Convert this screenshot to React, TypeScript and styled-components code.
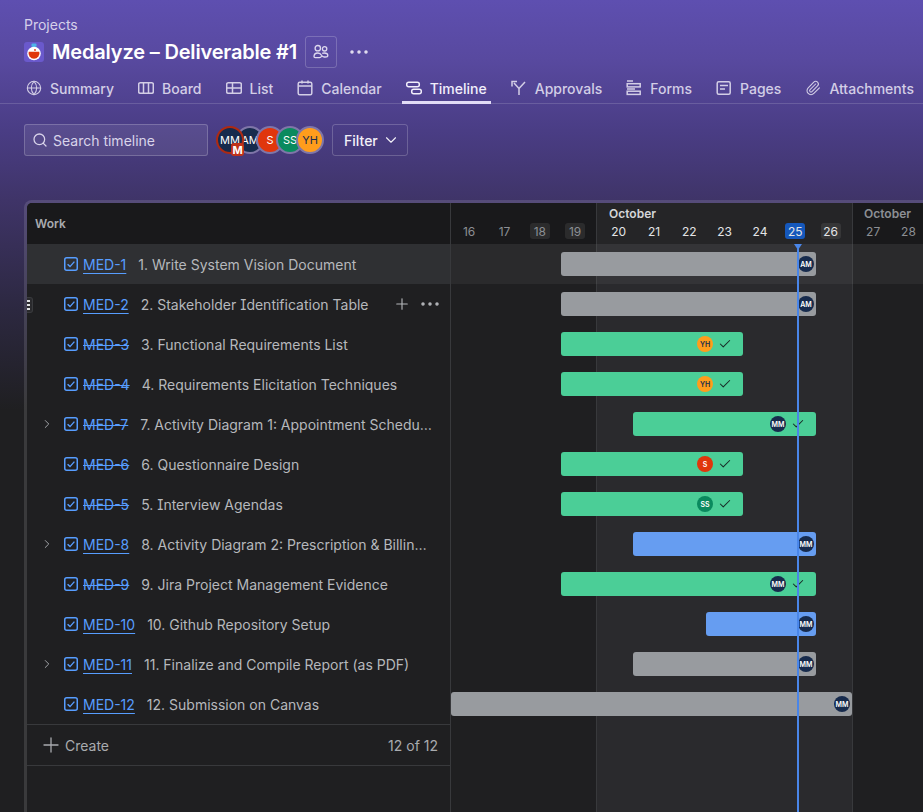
import styled, { createGlobalStyle } from 'styled-components';
import { Check, ChevronDown, ChevronRight, Ellipsis, Globe, Paperclip, Plus, Search } from 'lucide-react';

const GlobalStyle = createGlobalStyle`
  html, body { margin: 0; height: 100%; background: #1f1f21; }
  body { font-family: Inter, "Noto Sans", sans-serif; overflow: hidden; font-feature-settings: 'cv08' 1; }
  #root { height: 100%; }
  * { box-sizing: border-box; }
`;

const Page = styled.div`
  width: 923px;
  height: 812px;
  overflow: hidden;
  display: flex;
  flex-direction: column;
  background: linear-gradient(180deg, #5e4fb0 0px, #58499f 60px, #4a3d85 130px, #3f3468 200px, #2c2840 310px, #1f1f21 410px);
`;

const Header = styled.header`
  display: flex;
  flex-direction: column;
  padding: 17px 0 0 24px;
`;

const Crumb = styled.div`
  font-size: 14px;
  line-height: 16px;
  color: #d6d0ea;
`;

const TitleRow = styled.div`
  display: flex;
  align-items: center;
  height: 32px;
  margin-top: 3px;
`;

const ProjectIcon = styled.svg`
  width: 20px;
  height: 20px;
  margin-right: 8px;
  flex: none;
`;

const Title = styled.h1`
  margin: 0;
  font-size: 20px;
  line-height: 24px;
  font-weight: 600;
  letter-spacing: -0.17px;
  color: #ffffff;
`;

const PeopleButton = styled.button`
  width: 32px;
  height: 32px;
  margin-left: 8px;
  padding: 0;
  display: flex;
  align-items: center;
  justify-content: center;
  background: transparent;
  border: 1px solid rgba(255, 255, 255, 0.2);
  border-radius: 3px;
  color: #ddd8ee;
`;

const MoreButton = styled.span`
  display: flex;
  margin-left: 10px;
  color: #e6e2f2;
`;

const Tabs = styled.nav`
  display: flex;
  gap: 16px;
  height: 34px;
  margin: 2px 0 0 -24px;
  padding: 6px 0 0 22px;
  border-bottom: 1px solid rgba(255, 255, 255, 0.15);
  white-space: nowrap;
`;

const Tab = styled.div<{ $active?: boolean }>`
  display: flex;
  align-items: center;
  gap: 8px;
  height: 28px;
  padding: 0 4px 1px;
  font-size: 14px;
  font-weight: 500;
  color: ${({ $active }) => ($active ? '#f1eefb' : '#d3cee6')};
  border-bottom: 3px solid ${({ $active }) => ($active ? '#e2dcf7' : 'transparent')};
  flex: none;
`;

const TabGlyph = styled.svg`
  width: 16px;
  height: 16px;
  fill: none;
  stroke: currentColor;
  stroke-width: 1.5;
  flex: none;
`;

const Toolbar = styled.div`
  display: flex;
  align-items: center;
  height: 32px;
  margin: 20px 0 44px 24px;
`;

const SearchBox = styled.div`
  width: 184px;
  height: 32px;
  display: flex;
  align-items: center;
  gap: 5px;
  padding-left: 7px;
  border: 1px solid rgba(255, 255, 255, 0.2);
  border-radius: 3px;
  background: rgba(255, 255, 255, 0.08);
  color: #d9d4ea;
  font-size: 14px;
`;

const AvatarStack = styled.div`
  display: flex;
  margin-left: 8px;
  margin-right: 8px;
`;

const StackAvatar = styled.div<{ $bg: string; $first?: boolean }>`
  position: relative;
  width: 28px;
  height: 28px;
  margin-left: ${({ $first }) => ($first ? '0' : '-8px')};
  z-index: ${({ $first }) => ($first ? 2 : 1)};
  display: flex;
  align-items: center;
  justify-content: center;
  border-radius: 50%;
  background: ${({ $bg }) => $bg};
  border: 2px solid ${({ $first }) => ($first ? '#ae2a12' : '#7f76a8')};
  color: ${({ $bg }) => ($bg === '#ff9d1c' ? '#172b4d' : '#ffffff')};
  font-size: 11px;
  font-weight: 400;
`;

const RoleBadge = styled.span`
  position: absolute;
  right: -2px;
  bottom: -4px;
  width: 13px;
  height: 13px;
  display: flex;
  align-items: center;
  justify-content: center;
  background: #c0321a;
  border-radius: 3px;
  color: #fff;
  font-size: 11px;
  font-weight: 700;
`;

const FilterButton = styled.button`
  width: 76px;
  height: 32px;
  display: flex;
  align-items: center;
  gap: 4px;
  padding: 0 0 0 11px;
  background: transparent;
  border: 1px solid rgba(255, 255, 255, 0.2);
  border-radius: 3px;
  color: #f2f0f8;
  font-family: inherit;
  font-size: 14px;
  font-weight: 500;
`;

const Frame = styled.section`
  flex: 1;
  min-height: 0;
  margin-left: 24px;
  display: flex;
  background: #1f1f21;
  background-clip: padding-box;
  border-top: 3px solid rgba(255, 255, 255, 0.12);
  border-left: 3px solid rgba(255, 255, 255, 0.12);
  border-top-left-radius: 8px;
  overflow: hidden;
`;

const WorkPanel = styled.div`
  width: 424px;
  flex: none;
  display: flex;
  flex-direction: column;
  border-right: 1px solid #38393c;
`;

const WorkHead = styled.div`
  height: 41px;
  display: flex;
  align-items: center;
  padding-left: 8px;
  background: #19191b;
  color: #a9abaf;
  font-size: 12px;
  font-weight: 600;
`;

const TaskRow = styled.div<{ $hover?: boolean }>`
  position: relative;
  height: 40px;
  display: flex;
  align-items: center;
  padding: 0 18px 0 13px;
  background: ${({ $hover }) => ($hover ? '#2f3033' : 'transparent')};
  font-size: 14px;
`;

const Expander = styled.span`
  width: 14px;
  margin-right: 10px;
  display: flex;
  justify-content: center;
  color: #a9abaf;
  flex: none;
`;

const TaskCheck = styled.svg`
  width: 14px;
  height: 14px;
  margin-right: 5px;
  flex: none;
`;

const TaskKey = styled.a<{ $done?: boolean }>`
  color: #579dff;
  margin-right: 12px;
  flex: none;
  text-decoration: ${({ $done }) => ($done ? 'line-through' : 'underline')};
  text-underline-offset: 3px;
`;

const TaskTitle = styled.span`
  flex: 1;
  min-width: 0;
  overflow: hidden;
  white-space: nowrap;
  text-overflow: ellipsis;
  color: #b6b8bc;
`;

const RowActions = styled.span`
  display: flex;
  align-items: center;
  gap: 7px;
  margin-right: -10px;
  color: #b6b8bc;
`;

const DragHandle = styled.span`
  position: absolute;
  left: 0;
  top: 13px;
  width: 6px;
  height: 16px;
  display: flex;
  flex-direction: column;
  align-items: flex-start;
  justify-content: center;
  gap: 2px;
  background: #2a2a2d;
  border: 1px solid #3a3b3e;
  border-left: 0;
  border-radius: 0 3px 3px 0;
`;

const HandleDot = styled.i`
  width: 3px;
  height: 2px;
  background: #e2e3e5;
`;

const CreateRow = styled.div`
  height: 42px;
  display: flex;
  align-items: center;
  padding: 0 12px 0 12px;
  border-top: 1px solid #38393c;
  border-bottom: 1px solid #38393c;
  color: #a9abaf;
  font-size: 14px;
`;

const CreateLabel = styled.span`
  display: flex;
  align-items: center;
  gap: 2px;
  flex: 1;
`;

const Timeline = styled.div`
  position: relative;
  flex: 1;
  min-width: 0;
  display: flex;
  flex-direction: column;
  overflow: hidden;
`;

const DateHead = styled.div`
  height: 41px;
  display: flex;
  flex: none;
  position: relative;
  z-index: 1;
`;

const WeekHead = styled.div<{ $current?: boolean; $w: number }>`
  width: ${({ $w }) => $w}px;
  flex: none;
  display: flex;
  flex-direction: column;
  justify-content: flex-end;
  padding-bottom: 5px;
  background: ${({ $current }) => ($current ? '#252527' : '#19191b')};
  border-right: 1px solid #38393c;
`;

const MonthLabel = styled.div<{ $current?: boolean }>`
  font-size: 12px;
  line-height: 15px;
  font-weight: 600;
  margin: 0 0 2px ${({ $current }) => ($current ? 12 : 11)}px;
  color: ${({ $current }) => ($current ? '#d4d5d8' : '#8c8f94')};
`;

const Days = styled.div<{ $pad: number }>`
  display: flex;
  padding-left: ${({ $pad }) => $pad}px;
`;

const DayCell = styled.div`
  width: 35.33px;
  display: flex;
  justify-content: center;
  flex: none;
`;

const DayNum = styled.span<{ $tone: 'muted' | 'bright' | 'today'; $weekend?: boolean }>`
  width: 20px;
  height: 16px;
  display: flex;
  align-items: center;
  justify-content: center;
  border-radius: 3px;
  font-size: 12px;
  color: ${({ $tone }) => ($tone === 'muted' ? '#8c8f94' : '#e3e4e6')};
  background: ${({ $tone, $weekend }) =>
    $tone === 'today' ? '#1558bc' : $weekend ? 'rgba(255, 255, 255, 0.08)' : 'transparent'};
`;

/* Week shading sits behind the rows */
const WeekBands = styled.div`
  position: absolute;
  inset: 41px 0 0 0;
  display: flex;
`;

const Band = styled.div<{ $current?: boolean; $w: number }>`
  width: ${({ $w }) => $w}px;
  flex: none;
  background: ${({ $current }) => ($current ? '#2a2a2d' : '#1f1f21')};
  border-right: 1px solid #38393c;
`;

const BarRows = styled.div`
  position: relative;
  display: flex;
  flex-direction: column;
`;

const BarRow = styled.div<{ $hover?: boolean }>`
  height: 40px;
  padding-top: 8px;
  background: ${({ $hover }) => ($hover ? 'rgba(255, 255, 255, 0.05)' : 'transparent')};
`;

const Bar = styled.div<{ $color: string; $left: number; $width: number }>`
  margin-left: ${({ $left }) => $left}px;
  width: ${({ $width }) => $width}px;
  height: 24px;
  display: flex;
  align-items: center;
  justify-content: flex-end;
  gap: 4px;
  padding-right: 2px;
  border-radius: 3px;
  background: ${({ $color }) => $color};
`;

const BarAvatar = styled.span<{ $bg: string }>`
  width: 16px;
  height: 16px;
  display: flex;
  align-items: center;
  justify-content: center;
  border-radius: 50%;
  background: ${({ $bg }) => $bg};
  color: ${({ $bg }) => ($bg === '#ff9d1c' ? '#172b4d' : '#ffffff')};
  font-size: 7px;
  font-weight: 600;
`;

const BarCheck = styled.span`
  width: 16px;
  margin-right: 8px;
  display: flex;
  justify-content: center;
  color: #172b26;
`;

const TodayLine = styled.div`
  position: absolute;
  left: 346px;
  top: 41px;
  bottom: 0;
  width: 2px;
  background: #4a86e8;
  z-index: 2;
  &::before {
    content: '';
    position: absolute;
    left: -3px;
    top: 0;
    border-left: 4px solid transparent;
    border-right: 4px solid transparent;
    border-top: 6px solid #4a86e8;
  }
`;

const NAVY = '#172b4d';
const ORANGE = '#ff9d1c';
const RED = '#e0360c';
const GREEN = '#0a8a5e';
const GRAY = '#989b9f';
const MINT = '#4bce97';
const BLUE = '#669df1';

const tabs = [
  { label: 'Summary', icon: <Globe size={16} strokeWidth={1.6} /> },
  {
    label: 'Board',
    icon: (
      <TabGlyph viewBox="0 0 16 16">
        <rect x="0.7" y="2.7" width="14.6" height="10.6" rx="1.5" />
        <path d="M5.5 3v10M10.5 3v10" />
      </TabGlyph>
    ),
  },
  {
    label: 'List',
    icon: (
      <TabGlyph viewBox="0 0 16 16">
        <rect x="0.7" y="2.7" width="14.6" height="10.6" rx="1.5" />
        <path d="M1 8h14M6.5 3v10" />
      </TabGlyph>
    ),
  },
  {
    label: 'Calendar',
    icon: (
      <TabGlyph viewBox="0 0 16 16">
        <rect x="1.2" y="2.2" width="13.6" height="12.6" rx="1.5" />
        <path d="M1.5 6h13M5 0.5v3M11 0.5v3" />
      </TabGlyph>
    ),
  },
  {
    label: 'Timeline',
    active: true,
    icon: (
      <TabGlyph viewBox="0 0 16 16">
        <rect x="0.7" y="2.2" width="12.6" height="4.6" rx="2" />
        <rect x="5.7" y="9.2" width="9.6" height="4.6" rx="2" />
      </TabGlyph>
    ),
  },
  {
    label: 'Approvals',
    icon: (
      <TabGlyph viewBox="0 0 16 16">
        <path d="M8 15V8.5L3 3M1 6.5V1.5h5M8 8.5 14 2" />
      </TabGlyph>
    ),
  },
  {
    label: 'Forms',
    icon: (
      <TabGlyph viewBox="0 0 16 16">
        <path d="M1 1h6" />
        <rect x="1.2" y="3.7" width="13" height="3.2" />
        <path d="M1 9h8" />
        <rect x="1.2" y="11.2" width="13" height="3.2" />
      </TabGlyph>
    ),
  },
  {
    label: 'Pages',
    icon: (
      <TabGlyph viewBox="0 0 16 16">
        <rect x="1.2" y="1.7" width="13" height="12.6" rx="1.5" />
        <path d="M4 5.5h8M4 9h5" />
      </TabGlyph>
    ),
  },
  { label: 'Attachments', icon: <Paperclip size={16} strokeWidth={1.6} /> },
];

const stack = [
  { initials: 'MM', bg: NAVY, first: true },
  { initials: 'AM', bg: NAVY },
  { initials: 'S', bg: RED },
  { initials: 'SS', bg: GREEN },
  { initials: 'YH', bg: ORANGE },
];

type Task = {
  key: string;
  title: string;
  done?: boolean;
  expand?: boolean;
  left: number;
  width: number;
  color: string;
  who: string;
  whoBg: string;
  check?: boolean;
};

const tasks: Task[] = [
  { key: 'MED-1', title: '1. Write System Vision Document', left: 110, width: 255, color: GRAY, who: 'AM', whoBg: NAVY },
  { key: 'MED-2', title: '2. Stakeholder Identification Table', left: 110, width: 255, color: GRAY, who: 'AM', whoBg: NAVY },
  { key: 'MED-3', title: '3. Functional Requirements List', done: true, left: 110, width: 182, color: MINT, who: 'YH', whoBg: ORANGE, check: true },
  { key: 'MED-4', title: '4. Requirements Elicitation Techniques', done: true, left: 110, width: 182, color: MINT, who: 'YH', whoBg: ORANGE, check: true },
  { key: 'MED-7', title: '7. Activity Diagram 1: Appointment Scheduling', done: true, expand: true, left: 182, width: 183, color: MINT, who: 'MM', whoBg: NAVY, check: true },
  { key: 'MED-6', title: '6. Questionnaire Design', done: true, left: 110, width: 182, color: MINT, who: 'S', whoBg: RED, check: true },
  { key: 'MED-5', title: '5. Interview Agendas', done: true, left: 110, width: 182, color: MINT, who: 'SS', whoBg: GREEN, check: true },
  { key: 'MED-8', title: '8. Activity Diagram 2: Prescription & Billing Flow', expand: true, left: 182, width: 183, color: BLUE, who: 'MM', whoBg: NAVY },
  { key: 'MED-9', title: '9. Jira Project Management Evidence', done: true, left: 110, width: 255, color: MINT, who: 'MM', whoBg: NAVY, check: true },
  { key: 'MED-10', title: '10. Github Repository Setup', left: 255, width: 110, color: BLUE, who: 'MM', whoBg: NAVY },
  { key: 'MED-11', title: '11. Finalize and Compile Report (as PDF)', expand: true, left: 182, width: 183, color: GRAY, who: 'MM', whoBg: NAVY },
  { key: 'MED-12', title: '12. Submission on Canvas', left: 0, width: 401, color: GRAY, who: 'MM', whoBg: NAVY },
];

function TaskIcon() {
  return (
    <TaskCheck viewBox="0 0 14 14" fill="none">
      <rect x="0.75" y="0.75" width="12.5" height="12.5" rx="2" stroke="#579dff" strokeWidth="1.5" />
      <path d="M3.6 7.2 6 9.6l4.4-5" stroke="#579dff" strokeWidth="1.4" />
    </TaskCheck>
  );
}

export default function App() {
  return (
    <Page>
      <GlobalStyle />
      <Header>
        <Crumb>Projects</Crumb>
        <TitleRow>
          <ProjectIcon viewBox="0 0 20 20">
            <rect width="20" height="20" rx="3" fill="#6a59cc" />
            <rect x="7.5" y="1.5" width="5" height="3.5" rx="1" fill="#4fb3e8" />
            <circle cx="10" cy="11.5" r="6.8" fill="#ffffff" />
            <path d="M4.7 9.8h10.6a5.5 5.5 0 1 1-10.6 0Z" fill="#e0360c" />
            <circle cx="11" cy="8" r="0.9" fill="#e0360c" />
          </ProjectIcon>
          <Title>Medalyze – Deliverable #1</Title>
          <PeopleButton>
            <svg width="16" height="16" viewBox="0 0 16 16" fill="none" stroke="currentColor" strokeWidth="1.3">
              <circle cx="4.8" cy="4.2" r="2.7" />
              <circle cx="11.6" cy="4.8" r="2.2" />
              <path d="M1 12.6c0-2.2 1.6-3.6 3.9-3.6 2 0 3 1 3.6 2.2.5 1 1.4 1.8 2.7 1.8h1c1.5 0 2.6-.5 2.6-1.6 0-1.4-1.5-2.4-3.6-2.4-.7 0-1.4.1-2 .4M1 12.6c0 .6.5 1 1.2 1h4.3c1 0 1.6-.5 2.1-1.4" />
            </svg>
          </PeopleButton>
          <MoreButton>
            <Ellipsis size={24} strokeWidth={1.5} />
          </MoreButton>
        </TitleRow>
        <Tabs>
          {tabs.map((t) => (
            <Tab key={t.label} $active={t.active}>
              {t.icon}
              {t.label}
            </Tab>
          ))}
        </Tabs>
      </Header>

      <Toolbar>
        <SearchBox>
          <Search size={16} strokeWidth={1.9} />
          Search timeline
        </SearchBox>
        <AvatarStack>
          {stack.map((a) => (
            <StackAvatar key={a.initials} $bg={a.bg} $first={a.first}>
              {a.initials}
              {a.first && <RoleBadge>M</RoleBadge>}
            </StackAvatar>
          ))}
        </AvatarStack>
        <FilterButton>
          Filter
          <ChevronDown size={18} strokeWidth={1.5} />
        </FilterButton>
      </Toolbar>

      <Frame>
        <WorkPanel>
          <WorkHead>Work</WorkHead>
          {tasks.map((t, i) => (
            <TaskRow key={t.key} $hover={i === 0}>
              {i === 1 && (
                <DragHandle>
                  <HandleDot />
                  <HandleDot />
                  <HandleDot />
                </DragHandle>
              )}
              <Expander>{t.expand && <ChevronRight size={16} strokeWidth={1.6} />}</Expander>
              <TaskIcon />
              <TaskKey $done={t.done}>{t.key}</TaskKey>
              <TaskTitle>{t.title}</TaskTitle>
              {i === 1 && (
                <RowActions>
                  <Plus size={18} strokeWidth={1.5} />
                  <Ellipsis size={24} strokeWidth={1.5} />
                </RowActions>
              )}
            </TaskRow>
          ))}
          <CreateRow>
            <CreateLabel>
              <Plus size={24} strokeWidth={1.3} />
              Create
            </CreateLabel>
            12 of 12
          </CreateRow>
        </WorkPanel>

        <Timeline>
          <DateHead>
            <WeekHead $w={146}>
              <Days $pad={0.5}>
                <DayCell><DayNum $tone="muted">16</DayNum></DayCell>
                <DayCell><DayNum $tone="muted">17</DayNum></DayCell>
                <DayCell><DayNum $tone="muted" $weekend>18</DayNum></DayCell>
                <DayCell><DayNum $tone="muted" $weekend>19</DayNum></DayCell>
              </Days>
            </WeekHead>
            <WeekHead $w={256} $current>
              <MonthLabel $current>October</MonthLabel>
              <Days $pad={4}>
                <DayCell><DayNum $tone="bright">20</DayNum></DayCell>
                <DayCell><DayNum $tone="bright">21</DayNum></DayCell>
                <DayCell><DayNum $tone="bright">22</DayNum></DayCell>
                <DayCell><DayNum $tone="bright">23</DayNum></DayCell>
                <DayCell><DayNum $tone="bright">24</DayNum></DayCell>
                <DayCell><DayNum $tone="today">25</DayNum></DayCell>
                <DayCell><DayNum $tone="bright" $weekend>26</DayNum></DayCell>
              </Days>
            </WeekHead>
            <WeekHead $w={80}>
              <MonthLabel>October</MonthLabel>
              <Days $pad={2.5}>
                <DayCell><DayNum $tone="muted">27</DayNum></DayCell>
                <DayCell><DayNum $tone="muted">28</DayNum></DayCell>
              </Days>
            </WeekHead>
          </DateHead>

          <WeekBands>
            <Band $w={146} />
            <Band $w={256} $current />
            <Band $w={80} />
          </WeekBands>

          <BarRows>
            {tasks.map((t, i) => (
              <BarRow key={t.key} $hover={i === 0}>
                <Bar $color={t.color} $left={t.left} $width={t.width}>
                  <BarAvatar $bg={t.whoBg}>{t.who}</BarAvatar>
                  {t.check && (
                    <BarCheck>
                      <Check size={14} strokeWidth={1.8} />
                    </BarCheck>
                  )}
                </Bar>
              </BarRow>
            ))}
          </BarRows>

          <TodayLine />
        </Timeline>
      </Frame>
    </Page>
  );
}
